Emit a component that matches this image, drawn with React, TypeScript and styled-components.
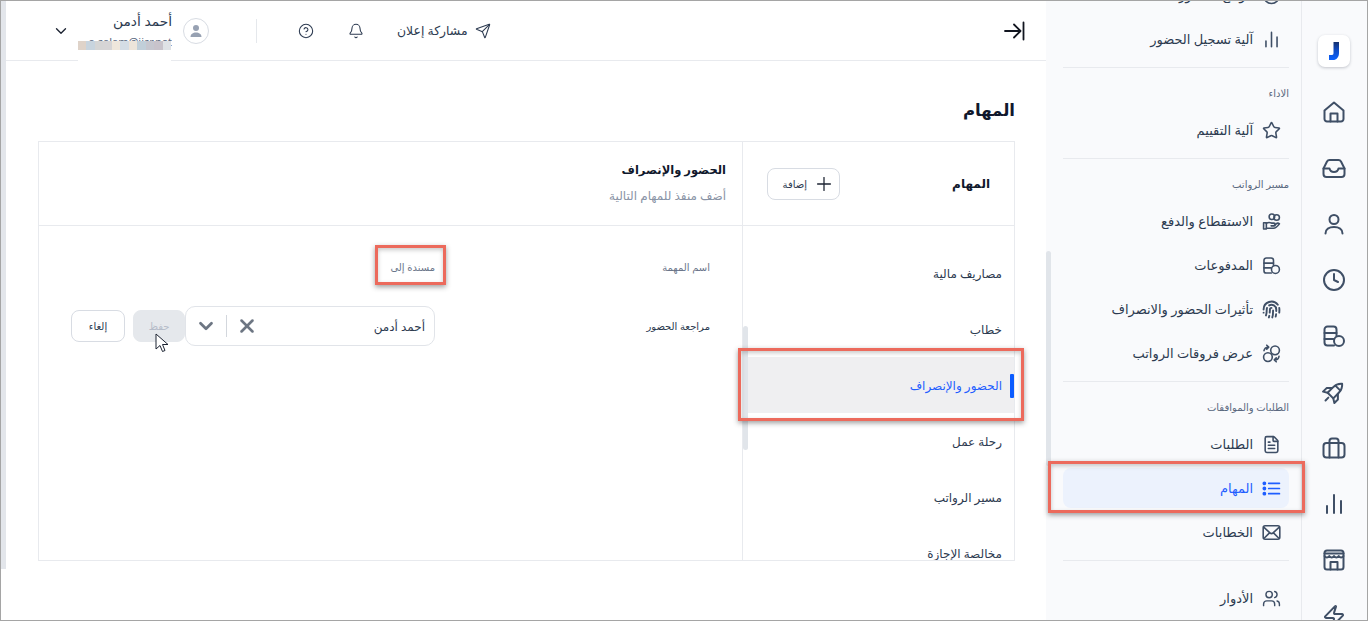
import styled, { createGlobalStyle } from "styled-components";
import {
  Bell,
  ChevronDown,
  CircleHelp,
  Clock,
  FileText,
  Fingerprint,
  Plus,
  Send,
  Star,
  Users,
  X,
  Zap,
} from "lucide-react";
import type { ComponentType, ReactNode, SVGProps } from "react";

const GlobalStyle = createGlobalStyle`
  html, body {
    margin: 0;
    padding: 0;
    background: #fff;
    overflow: hidden;
  }
  * { box-sizing: border-box; }
  body {
    font-family: "Noto Sans", "DejaVu Sans", "Liberation Sans", sans-serif;
  }
`;

const Frame = styled.div`
  width: 1368px;
  height: 621px;
  display: flex;
  flex-direction: row;
  direction: rtl;
  overflow: hidden;
  position: relative;
  background: #fff;
  border: 1px solid #a5a5a5;
`;

const Rail = styled.aside`
  width: 66px;
  flex: none;
  height: 700px;
  margin-top: -1px;
  padding: 35px 1px 0 0;
  background: #f9fafc;
  border-left: 1px solid #e8eaee;
  display: flex;
  flex-direction: column;
  align-items: center;
`;

const LogoTile = styled.div`
  width: 32px;
  height: 32px;
  background: #fff;
  border-radius: 7px;
  box-shadow: 0 1px 3px rgba(30, 40, 60, 0.25);
  display: flex;
  align-items: center;
  justify-content: center;
  margin-bottom: 33px;
`;

const RailButton = styled.div`
  width: 24px;
  height: 24px;
  margin-bottom: 32px;
  flex: none;
  color: #3f4f66;
  display: flex;
  align-items: center;
  justify-content: center;
`;

const Panel = styled.nav`
  width: 255px;
  flex: none;
  background: #f9fafc;
  padding: 0 12px 0 17px;
  position: relative;
  z-index: 2;
`;

const PanelScroll = styled.div`
  margin-top: -43px;
`;

const Section = styled.section<{ $last?: boolean }>`
  padding: 17px 0 8px;
  display: flex;
  flex-direction: column;
  gap: 4px;
  border-bottom: ${({ $last }) => ($last ? "none" : "1px solid #e8eaee")};
`;

const SectionLabel = styled.div`
  height: 16px;
  margin-bottom: 5px;
  font-size: 10px;
  line-height: 16px;
  color: #5b6980;
`;

const NavRow = styled.div<{ $active?: boolean }>`
  position: relative;
  height: 40px;
  flex: none;
  display: flex;
  align-items: center;
  gap: 8px;
  padding-right: 8px;
  border-radius: 8px;
  font-size: 13px;
  white-space: nowrap;
  color: ${({ $active }) => ($active ? "#1f5eff" : "#2c3a50")};
  background: ${({ $active }) => ($active ? "#ecf2fd" : "transparent")};
`;

const NavIconBox = styled.span<{ $active?: boolean }>`
  width: 20px;
  height: 20px;
  flex: none;
  display: flex;
  align-items: center;
  justify-content: center;
  color: ${({ $active }) => ($active ? "#1f5eff" : "#3f4f66")};
`;

const PanelThumb = styled.div`
  position: absolute;
  left: 0;
  top: 250px;
  width: 5px;
  height: 215px;
  background: #e1e5ea;
  border-radius: 3px;
`;

const Callout = styled.div<{ $inset: string }>`
  position: absolute;
  inset: ${({ $inset }) => $inset};
  border: 3px solid #ec6a5c;
  pointer-events: none;
  z-index: 5;
  box-shadow: 0 2px 5px rgba(40, 40, 40, 0.45), inset 0 2px 4px rgba(40, 40, 40, 0.25);
`;

const Main = styled.main`
  flex: 1;
  min-width: 0;
  display: flex;
  flex-direction: column;
  position: relative;
`;

const PageThumb = styled.div`
  position: absolute;
  left: 0;
  top: 0;
  width: 5px;
  height: 568px;
  background: #e3e6eb;
`;

const TopBar = styled.header`
  height: 60px;
  flex: none;
  border-bottom: 1px solid #e8eaee;
  margin-left: 5px;
  display: flex;
  align-items: center;
  justify-content: space-between;
  padding: 0 20px 0 46px;
`;

const CollapseButton = styled.div`
  width: 24px;
  height: 24px;
  color: #11151f;
  display: flex;
  align-items: center;
  justify-content: center;
`;

const TopActions = styled.div`
  display: flex;
  align-items: center;
  height: 100%;
`;

const ShareLink = styled.div`
  display: flex;
  align-items: center;
  gap: 7px;
  font-size: 12.4px;
  color: #2c3a50;
  white-space: nowrap;
`;

const TopIcon = styled.div`
  width: 18px;
  height: 18px;
  margin-right: 32px;
  color: #2c3a50;
  display: flex;
  align-items: center;
  justify-content: center;
`;

const TopDivider = styled.div`
  width: 1px;
  height: 24px;
  margin-right: 40px;
  background: #e5e8ec;
`;

const Avatar = styled.div`
  width: 26px;
  height: 26px;
  margin-right: 47px;
  border-radius: 50%;
  border: 1px solid #d8dce3;
  display: flex;
  align-items: center;
  justify-content: center;
  flex: none;
  background: #fff;
`;

const Account = styled.div`
  position: relative;
  width: 93px;
  height: 40px;
  margin-right: 11px;
`;

const AccountName = styled.div`
  font-size: 13.8px;
  line-height: 20px;
  color: #2c3a50;
  white-space: nowrap;
`;

const AccountMail = styled.div`
  margin-top: 3px;
  font-size: 11px;
  line-height: 16px;
  color: #5b6980;
  direction: ltr;
  text-align: right;
  white-space: nowrap;
  overflow: hidden;
`;

const MailMask = styled.div`
  position: absolute;
  right: 1px;
  top: 30px;
  width: 93px;
  height: 23px;
  background: #fff;
  display: flex;
  align-items: flex-start;
`;

const MaskCell = styled.span<{ $tone: string }>`
  flex: 1;
  height: 9px;
  background: ${({ $tone }) => $tone};
`;

const ChevronBox = styled.div`
  margin-right: 9px;
  width: 18px;
  height: 18px;
  color: #1d2433;
  display: flex;
  align-items: center;
  justify-content: center;
`;

const Content = styled.div`
  flex: 1;
  min-height: 0;
  padding: 0 31px 0 32px;
  margin-left: 5px;
`;

const PageTitle = styled.h1`
  margin: 31px 0 0;
  height: 49px;
  font-size: 16.5px;
  line-height: 36px;
  font-weight: 700;
  color: #10182c;
`;

const Card = styled.div`
  height: 420px;
  border: 1px solid #e8eaee;
  display: grid;
  grid-template-columns: 272px 1fr;
  grid-template-rows: 84px 1fr;
`;

const HeadCell = styled.div<{ $side?: boolean }>`
  display: flex;
  border-bottom: 1px solid #e8eaee;
  border-left: ${({ $side }) => ($side ? "1px solid #e8eaee" : "none")};
`;

const TasksHead = styled(HeadCell)`
  align-items: center;
  justify-content: space-between;
  padding: 0 24px;
`;

const TasksTitle = styled.div`
  font-size: 12px;
  font-weight: 600;
  color: #10182c;
`;

const AddButton = styled.div`
  height: 32px;
  width: 73px;
  border: 1px solid #d8dce3;
  border-radius: 8px;
  background: #fff;
  display: flex;
  align-items: center;
  gap: 6px;
  padding-right: 4px;
  font-size: 10px;
  color: #2c3a50;
  white-space: nowrap;
  svg {
    color: #1d2433;
  }
`;

const DetailHead = styled(HeadCell)`
  flex-direction: column;
  padding: 17px 16px 0;
`;

const DetailTitle = styled.div`
  font-size: 11.5px;
  line-height: 22px;
  font-weight: 600;
  color: #10182c;
`;

const DetailHint = styled.div`
  margin-top: 6px;
  font-size: 12px;
  line-height: 18px;
  color: #8a94a6;
`;

const TaskList = styled.div`
  position: relative;
  border-left: 1px solid #e8eaee;
  min-height: 0;
`;

const TaskScroll = styled.div`
  height: 100%;
  overflow: hidden;
  display: flex;
  flex-direction: column;
  padding-top: 19px;
`;

const TaskRow = styled.div<{ $active?: boolean }>`
  position: relative;
  height: 56px;
  flex: none;
  display: flex;
  align-items: center;
  padding: 0 12px;
  font-size: 12px;
  white-space: nowrap;
  color: ${({ $active }) => ($active ? "#1f5eff" : "#2c3a50")};
  background: ${({ $active }) => ($active ? "#efeff1" : "transparent")};
`;

const ActiveMark = styled.span`
  position: absolute;
  right: 0;
  top: 17px;
  width: 4px;
  height: 24px;
  background: #0b5cff;
  border-radius: 1px;
`;

const ListThumb = styled.div`
  position: absolute;
  left: 0;
  top: 100px;
  width: 5px;
  height: 124px;
  background: #e1e5ea;
  border-radius: 3px;
  z-index: 1;
`;

const Detail = styled.div`
  padding: 31px 32px 0 0;
`;

const DetailGrid = styled.div`
  display: grid;
  grid-template-columns: 275px 250px auto;
  align-items: center;
  row-gap: 29px;
`;

const ColumnLabel = styled.div`
  position: relative;
  height: 20px;
  font-size: 10px;
  line-height: 20px;
  color: #6b768a;
`;

const AssigneeLabel = styled(ColumnLabel)`
  width: 60px;
`;

const TaskName = styled.div`
  font-size: 10px;
  color: #2c3a50;
`;

const PickerRow = styled.div`
  display: flex;
  align-items: center;
  gap: 8px;
`;

const Picker = styled.div`
  height: 40px;
  border: 1px solid #e1e4e9;
  border-radius: 10px;
  display: flex;
  align-items: center;
  padding: 0 9px 0 9px;
  font-size: 12px;
  color: #2c3a50;
`;

const PickerValue = styled.span`
  flex: 1;
`;

const PickerTool = styled.span`
  display: flex;
  align-items: center;
  color: #6d7683;
`;

const PickerDivider = styled.span`
  width: 1px;
  height: 22px;
  background: #d3d7dd;
  margin: 0 9px;
`;

const ActionButton = styled.div<{ $disabled?: boolean }>`
  position: relative;
  height: 32px;
  width: ${({ $disabled }) => ($disabled ? "52px" : "54px")};
  border-radius: 8px;
  display: flex;
  align-items: center;
  justify-content: center;
  font-size: 10px;
  color: ${({ $disabled }) => ($disabled ? "#b5bcc9" : "#2c3a50")};
  background: ${({ $disabled }) => ($disabled ? "#e5e8ec" : "#fff")};
  border: 1px solid ${({ $disabled }) => ($disabled ? "#e5e8ec" : "#d8dce3")};
`;

const Pointer = styled.svg`
  position: absolute;
  left: 21px;
  top: 22px;
  z-index: 6;
`;

type GlyphProps = SVGProps<SVGSVGElement> & { size?: number };

const Glyph = ({ size = 24, children, ...rest }: GlyphProps) => (
  <svg
    width={size}
    height={size}
    viewBox="0 0 24 24"
    fill="none"
    stroke="currentColor"
    strokeWidth={2}
    strokeLinecap="round"
    strokeLinejoin="round"
    {...rest}
  >
    {children}
  </svg>
);

const HomeIcon = ({ size }: GlyphProps) => (
  <Glyph size={size}>
    <path d="M2.5 10.5 12 2.5l9.5 8V19a2.5 2.5 0 0 1-2.5 2.5H5A2.5 2.5 0 0 1 2.5 19z" />
    <path d="M8.5 21.5V13.5h7v8" />
  </Glyph>
);

const InboxIcon = ({ size }: GlyphProps) => (
  <Glyph size={size}>
    <path d="M1.5 12.5 5 5.5A3 3 0 0 1 7.5 4h9A3 3 0 0 1 19 5.5l3.5 7V18a3 3 0 0 1-3 3h-15a3 3 0 0 1-3-3z" />
    <path d="M1.5 12.5h6c.5 2.2 2.2 3.5 4.5 3.5s4-1.3 4.5-3.5h6" />
  </Glyph>
);

const UserIcon = ({ size }: GlyphProps) => (
  <Glyph size={size}>
    <circle cx="12" cy="7.5" r="4.5" />
    <path d="M3.5 21.5c0-4.2 3.6-6.5 8.5-6.5s8.5 2.3 8.5 6.5" />
  </Glyph>
);

const LedgerIcon = ({ size }: GlyphProps) => (
  <Glyph size={size}>
    <path d="M14.5 12V5.5a3 3 0 0 0-3-3h-6a3 3 0 0 0-3 3v13a3 3 0 0 0 3 3h6.5" />
    <path d="M2.5 9h12M2.5 15h9" />
    <circle cx="17" cy="17" r="5" />
  </Glyph>
);

const RocketIcon = ({ size }: GlyphProps) => (
  <Glyph size={size}>
    <g transform="rotate(45 12 12)">
      <path d="M12 0.5c3 2.5 4 5.8 4 9V17H8V9.5c0-3.2 1-6.5 4-9z" />
      <path d="M8.5 6.5h7" />
      <path d="M8 10.5 4 14.5V19.5l4-2.5M16 10.5l4 4V19.5l-4-2.5" />
      <path d="M12 20v4" />
    </g>
  </Glyph>
);

const CaseIcon = ({ size }: GlyphProps) => (
  <Glyph size={size}>
    <rect x="1.5" y="7" width="21" height="14.5" rx="3" />
    <path d="M7.5 21.5V7M16.5 21.5V7M7.5 7V5a2.5 2.5 0 0 1 2.5-2.5h4A2.5 2.5 0 0 1 16.5 5v2" />
  </Glyph>
);

const BarsIcon = ({ size }: GlyphProps) => (
  <Glyph size={size}>
    <path d="M5 21v-7M12 21V3M19 21V9" />
  </Glyph>
);

const StoreIcon = ({ size }: GlyphProps) => (
  <Glyph size={size}>
    <rect x="2.5" y="2.5" width="19" height="19" rx="2.5" />
    <path d="M2.5 8c1.6 2 3.2 2 4.8 0 1.6 2 3.2 2 4.7 0 1.6 2 3.2 2 4.7 0 1.6 2 3.2 2 4.8 0" />
    <path d="M2.5 5.5h19" />
    <path d="M8.5 21.5V14h7v7.5" />
  </Glyph>
);

const CoinsHandIcon = ({ size }: GlyphProps) => (
  <Glyph size={size} strokeWidth={2}>
    <circle cx="12.5" cy="6" r="3.5" />
    <circle cx="18.5" cy="7" r="3.5" />
    <path d="M2 13.5h3.5v8H2z" />
    <path d="M5.5 14.5c2-1.5 4.5-1.5 6.5-.5h3a1.5 1.5 0 0 1 0 3.5h-3.5" />
    <path d="M5.5 20.5h9c2.5 0 4.5-1.5 7.5-5.5-1.2-1.2-2.8-1.2-4 0l-2.5 2" />
  </Glyph>
);

const SwapIcon = ({ size }: GlyphProps) => (
  <Glyph size={size}>
    <circle cx="7.5" cy="16.5" r="5.5" />
    <circle cx="16.5" cy="8" r="5.5" />
    <path d="M2.5 8.5C3 5.5 5 4 8 4M6 1.5 8.5 4 6 6.5" />
    <path d="M21.5 15.5c-.5 3-2.5 4.5-5.5 4.5M18 17.5 15.5 20l2.5 2.5" />
  </Glyph>
);

const TaskListIcon = ({ size }: GlyphProps) => (
  <Glyph size={size} strokeWidth={2.2}>
    <path d="M8.5 5.5H22M8.5 12H22M8.5 18.5H22" />
    <circle cx="3" cy="5.5" r="1.3" fill="currentColor" />
    <circle cx="3" cy="12" r="1.3" fill="currentColor" />
    <circle cx="3" cy="18.5" r="1.3" fill="currentColor" />
  </Glyph>
);

const LetterIcon = ({ size }: GlyphProps) => (
  <Glyph size={size}>
    <rect x="1.5" y="3.5" width="21" height="17" rx="2.5" />
    <path d="M2.5 5.5 10 12.5c1.2 1.1 2.8 1.1 4 0l7.5-7M3 19l6.5-6.5M21 19l-6.5-6.5" />
  </Glyph>
);

type IconType = ComponentType<{ size?: number }>;

const LucideClock: IconType = ({ size }) => <Clock size={size} strokeWidth={2} />;
const LucideZap: IconType = ({ size }) => <Zap size={size} strokeWidth={2} />;
const LucideStar: IconType = ({ size }) => <Star size={size} strokeWidth={2} />;
const LucideFile: IconType = ({ size }) => <FileText size={size} strokeWidth={2} />;
const LucideFinger: IconType = ({ size }) => <Fingerprint size={size} strokeWidth={2.4} />;
const LucideUsers: IconType = ({ size }) => <Users size={size} strokeWidth={1.8} />;

const railIcons: IconType[] = [
  HomeIcon,
  InboxIcon,
  UserIcon,
  LucideClock,
  LedgerIcon,
  RocketIcon,
  CaseIcon,
  BarsIcon,
  StoreIcon,
  LucideZap,
];

const maskTones = ["#dfe2e6", "#c8c3cb", "#c6c7cf", "#c1cfd9", "#ece4da", "#d4dde5", "#efe7dc", "#d6d5d6", "#d5d5d5", "#c8d4de", "#dfd3c9"];

const taskNames = ["مصاريف مالية", "خطاب", "الحضور والإنصراف", "رحلة عمل", "مسير الرواتب", "مخالصة الإجازة"];

const NavItem = ({ icon: Icon, active, children }: { icon: IconType; active?: boolean; children: ReactNode }) => (
  <NavRow $active={active}>
    <NavIconBox $active={active}>
      <Icon size={19} />
    </NavIconBox>
    {children}
    {active && <Callout $inset="-7px -16px -5px -15px" />}
  </NavRow>
);

const App = () => {
  return (
    <Frame>
      <GlobalStyle />
      <Rail>
        <LogoTile>
          <svg width="10" height="18" viewBox="0 0 10 18">
            <defs>
              <linearGradient id="jmark" x1="0" y1="0" x2="0" y2="1">
                <stop offset="0" stopColor="#14306e" />
                <stop offset="0.45" stopColor="#0f4bc4" />
                <stop offset="1" stopColor="#0b62ff" />
              </linearGradient>
            </defs>
            <path d="M4.5 0H10v11c0 4.3-2.5 7-6 7H0v-5h3c1 0 1.5-.8 1.5-2z" fill="url(#jmark)" />
          </svg>
        </LogoTile>
        {railIcons.map((Icon, i) => (
          <RailButton key={i}>
            <Icon size={24} />
          </RailButton>
        ))}
      </Rail>

      <Panel>
        <PanelThumb />
        <PanelScroll>
          <Section>
            <NavItem icon={LucideClock}>مواقع الحضور</NavItem>
            <NavItem icon={BarsIcon}>آلية تسجيل الحضور</NavItem>
          </Section>
          <Section>
            <SectionLabel>الاداء</SectionLabel>
            <NavItem icon={LucideStar}>آلية التقييم</NavItem>
          </Section>
          <Section>
            <SectionLabel>مسير الرواتب</SectionLabel>
            <NavItem icon={CoinsHandIcon}>الاستقطاع والدفع</NavItem>
            <NavItem icon={LedgerIcon}>المدفوعات</NavItem>
            <NavItem icon={LucideFinger}>تأثيرات الحضور والانصراف</NavItem>
            <NavItem icon={SwapIcon}>عرض فروقات الرواتب</NavItem>
          </Section>
          <Section>
            <SectionLabel>الطلبات والموافقات</SectionLabel>
            <NavItem icon={LucideFile}>الطلبات</NavItem>
            <NavItem icon={TaskListIcon} active>
              المهام
            </NavItem>
            <NavItem icon={LetterIcon}>الخطابات</NavItem>
          </Section>
          <Section $last>
            <NavItem icon={LucideUsers}>الأدوار</NavItem>
          </Section>
        </PanelScroll>
      </Panel>

      <Main>
        <PageThumb />
        <TopBar>
          <CollapseButton>
            <svg width="24" height="24" viewBox="0 0 24 24" fill="none" stroke="currentColor" strokeWidth="1.8" strokeLinecap="round" strokeLinejoin="round">
              <path d="M3 12h15M12 5.5l6.5 6.5-6.5 6.5M21.5 3.5v17" />
            </svg>
          </CollapseButton>
          <TopActions>
            <ShareLink>
              <Send size={16} strokeWidth={1.6} />
              مشاركة إعلان
            </ShareLink>
            <TopIcon>
              <Bell size={16} strokeWidth={1.6} />
            </TopIcon>
            <TopIcon>
              <CircleHelp size={16} strokeWidth={1.6} />
            </TopIcon>
            <TopDivider />
            <Avatar>
              <svg width="14" height="14" viewBox="0 0 14 14" fill="#97a1b2">
                <circle cx="7" cy="4" r="3" />
                <path d="M1.5 13c0-3 2.5-4.5 5.5-4.5s5.5 1.5 5.5 4.5z" />
              </svg>
            </Avatar>
            <Account>
              <AccountName>أحمد أدمن</AccountName>
              <AccountMail>a.salam@jisr.net</AccountMail>
              <MailMask>
                {maskTones.map((tone, i) => (
                  <MaskCell key={i} $tone={tone} />
                ))}
              </MailMask>
            </Account>
            <ChevronBox>
              <ChevronDown size={18} strokeWidth={1.8} />
            </ChevronBox>
          </TopActions>
        </TopBar>
        <Content>
          <PageTitle>المهام</PageTitle>
          <Card>
            <TasksHead $side>
              <TasksTitle>المهام</TasksTitle>
              <AddButton>
                <Plus size={22} strokeWidth={1.4} />
                إضافة
              </AddButton>
            </TasksHead>
            <DetailHead>
              <DetailTitle>الحضور والإنصراف</DetailTitle>
              <DetailHint>أضف منفذ للمهام التالية</DetailHint>
            </DetailHead>
            <TaskList>
              <ListThumb />
              <TaskScroll>
                {taskNames.map((name, i) => (
                  <TaskRow key={name} $active={i === 2}>
                    {name}
                    {i === 2 && <ActiveMark />}
                  </TaskRow>
                ))}
              </TaskScroll>
              <Callout $inset="122px -10px 139px -5px" />
            </TaskList>
            <Detail>
              <DetailGrid>
                <ColumnLabel>اسم المهمة</ColumnLabel>
                <AssigneeLabel>
                  مسندة إلى
                  <Callout $inset="-12px -11px -8px 0px" />
                </AssigneeLabel>
                <span />
                <TaskName>مراجعة الحضور</TaskName>
                <Picker>
                  <PickerValue>أحمد أدمن</PickerValue>
                  <PickerTool>
                    <X size={22} strokeWidth={2.8} />
                  </PickerTool>
                  <PickerDivider />
                  <PickerTool>
                    <ChevronDown size={22} strokeWidth={3} />
                  </PickerTool>
                </Picker>
                <PickerRow>
                  <ActionButton $disabled>
                    حفظ
                    <Pointer width="14" height="20" viewBox="0 0 14 20">
                      <path d="M1 1v15l4-3.5 2.5 6 2.5-1-2.5-6H13z" fill="#fff" stroke="#1d2433" strokeWidth="1" />
                    </Pointer>
                  </ActionButton>
                  <ActionButton>إلغاء</ActionButton>
                </PickerRow>
              </DetailGrid>
            </Detail>
          </Card>
        </Content>
      </Main>
    </Frame>
  );
};

export default App;
